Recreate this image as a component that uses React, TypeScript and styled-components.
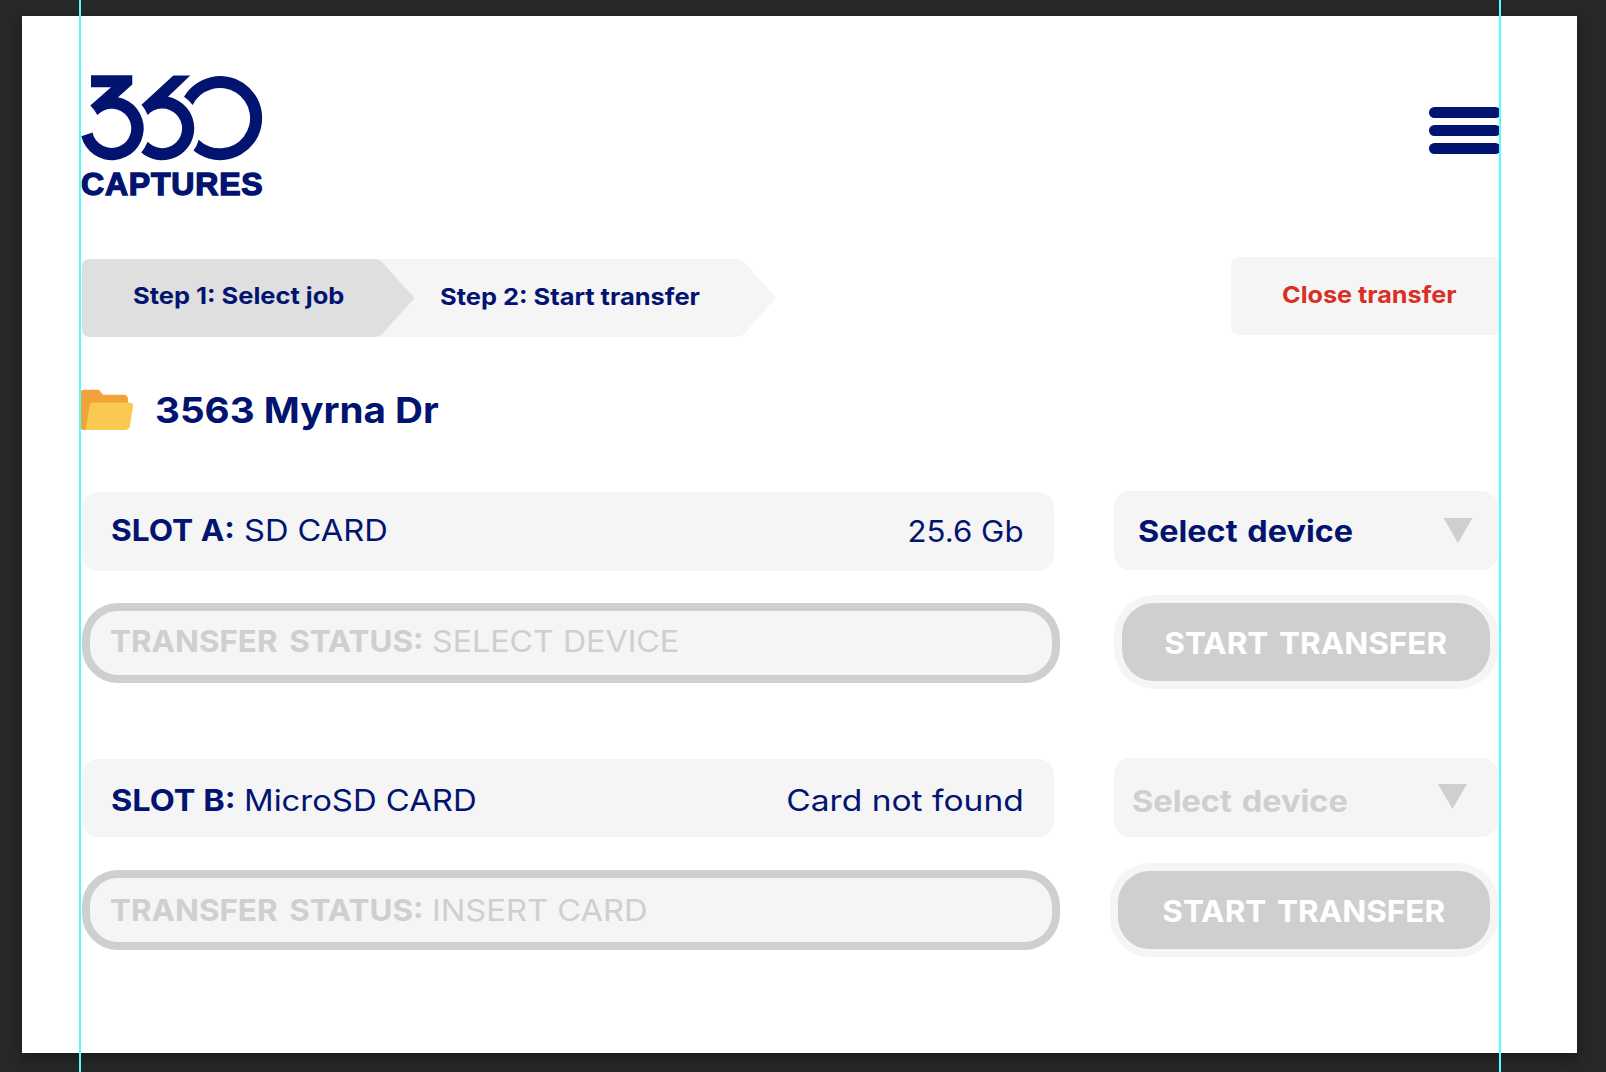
import React from 'react';
import styled, { createGlobalStyle } from 'styled-components';

const color = {
  navy: '#021470',
  panel: '#f5f5f5',
  muted: '#cfcfcf',
  step: '#dfdfdf',
  danger: '#d93025',
  guide: '#4dffff',
  desk: '#282828',
};

const GlobalStyle = createGlobalStyle`
  * { box-sizing: border-box; }
  body {
    margin: 0;
    background: ${color.desk};
    font-family: Inter, "Liberation Sans", sans-serif;
    color: ${color.navy};
  }
  button { font: inherit; color: inherit; border: 0; margin: 0; text-align: left; }
`;

const Desk = styled.div`
  position: relative;
  height: 1072px;
  width: 1606px;
  padding: 16px 29px 19px 22px;
  background: ${color.desk};
  overflow: hidden;
`;

const Guide = styled.div<{ $x: number }>`
  position: absolute;
  z-index: 5;
  top: 0;
  bottom: 0;
  left: ${(p) => p.$x}px;
  width: 2px;
  background: ${color.guide};
`;

const Sheet = styled.main`
  height: 1037px;
  padding: 59px 77px 0 60px;
  background: #fff;
  box-shadow: 0 5px 14px rgba(0, 0, 0, 0.4);
`;

/* Widens the letterforms to give the interface its extended look. */
const Wide = styled.span<{ $scale: number; $from?: 'left' | 'center' | 'right'; $word?: number }>`
  display: inline-block;
  word-spacing: ${(p) => p.$word ?? 0}px;
  transform: scaleX(${(p) => p.$scale});
  transform-origin: ${(p) => p.$from ?? 'left'} center;
`;

const Header = styled.header`
  display: flex;
  justify-content: space-between;
  align-items: flex-start;
  height: 122px;
`;

const Logo = styled.div`
  display: flex;
  flex-direction: column;
  gap: 10px;
  margin-left: -1px;
`;

const LogoMark = styled.svg`
  display: block;
  width: 183px;
  height: 86px;
  fill: ${color.navy};
`;

const LogoName = styled.span`
  font: 700 32px/26px "Liberation Sans", Arial, sans-serif;
  letter-spacing: 0.8px;
  -webkit-text-stroke: 1.4px ${color.navy};
  white-space: nowrap;
`;

const Menu = styled.button`
  display: flex;
  flex-direction: column;
  gap: 7px;
  width: 72px;
  margin: 32px -1px 0 0;
  padding: 0;
  background: none;
`;

const MenuBar = styled.span`
  height: 11px;
  border-radius: 5.5px;
  background: ${color.navy};
`;

const Toolbar = styled.nav`
  display: flex;
  justify-content: space-between;
  align-items: flex-start;
  height: 80px;
  margin-top: 60px;
  font-size: 23.5px;
  font-weight: 700;
  white-space: nowrap;
`;

const Steps = styled.div`
  display: flex;
  margin-top: 2px;
`;

const FirstStep = styled.div`
  position: relative;
  z-index: 1;
  display: flex;
  align-items: center;
  width: 333px;
  height: 78px;
  padding: 0 0 5px 51px;
  background: ${color.step};
  clip-path: path('M8 0H292Q297 0 301 4L332.5 39L301 74Q297 78 292 78H8Q0 78 0 70V8Q0 0 8 0Z');
`;

const SecondStep = styled.div`
  display: flex;
  align-items: center;
  width: 406px;
  height: 78px;
  margin-left: -45px;
  padding: 0 0 4px 70px;
  background: ${color.panel};
  clip-path: path('M0 0H366Q371 0 375 4L406 38.5L375 74Q371 78 366 78H0Z');
`;

const CloseButton = styled.button`
  width: 270px;
  height: 78px;
  margin-right: -1px;
  padding: 0 0 3px 50.5px;
  border-radius: 8px;
  background: ${color.panel};
  color: ${color.danger};
`;

const JobTitle = styled.h1`
  display: flex;
  align-items: center;
  gap: 21px;
  height: 42px;
  margin: 52px 0 60px -2px;
  font-size: 36px;
  font-weight: 700;
  line-height: 42px;
`;

const FolderIcon = styled.svg`
  width: 54px;
  height: 42px;
`;

const Slot = styled.section<{ $gap: number }>`
  display: grid;
  grid-template: 80px 94px / 978px 388px;
  gap: ${(p) => p.$gap}px 50px;
  align-items: start;
  font-size: 30px;
  line-height: 36px;
  white-space: nowrap;

  & + & { margin-top: 69px; }
`;

const CardInfo = styled.div<{ $height: number; $top?: number; $bottom?: number }>`
  display: flex;
  align-items: center;
  width: 972px;
  height: ${(p) => p.$height}px;
  margin-top: 1px;
  padding: ${(p) => p.$top ?? 0}px 30.5px ${(p) => p.$bottom ?? 0}px 29px;
  border-radius: 16px;
  background: ${color.panel};
`;

const Label = styled.strong<{ $width: number }>`
  width: ${(p) => p.$width}px;
  font-weight: 700;
`;

const Detail = styled.span`
  font-size: 29.5px;
  font-weight: 400;
`;

const Capacity = styled.span<{ $drop?: number }>`
  margin: ${(p) => p.$drop ?? 0}px 0 0 auto;
  font-size: 29.5px;
  font-weight: 400;
`;

const DeviceSelect = styled.button<{ $disabled?: boolean }>`
  display: flex;
  justify-content: space-between;
  align-items: center;
  justify-self: end;
  width: 384px;
  height: 79px;
  padding: ${(p) => (p.$disabled ? '0 31px 0 18px' : '0 25.5px 0 24px')};
  border-radius: 16px;
  background: ${color.panel};
  color: ${(p) => (p.$disabled ? color.muted : color.navy)};
  font-weight: 700;
`;

const SelectText = styled.span<{ $nudge: number }>`
  margin-top: ${(p) => p.$nudge}px;
`;

const Arrow = styled.span<{ $lift: number }>`
  width: 29px;
  height: 25px;
  margin-bottom: ${(p) => p.$lift}px;
  background: ${color.muted};
  clip-path: polygon(0 0, 100% 0, 50% 100%);
`;

const Status = styled.div<{ $nudge: number }>`
  display: flex;
  align-items: center;
  align-self: center;
  height: 80px;
  margin-top: ${(p) => (p.$nudge ? 1 : 0)}px;
  padding: 0 0 ${(p) => p.$nudge}px 20px;
  border: 8px solid ${color.muted};
  border-radius: 36px;
  background: ${color.panel};
  color: ${color.muted};
`;

const StartButton = styled.button<{ $width: number }>`
  justify-self: end;
  width: ${(p) => p.$width}px;
  height: 94px;
  padding: 1px 0 0;
  border: 8px solid ${color.panel};
  border-radius: 40px;
  background: ${color.muted};
  color: #fff;
  font-weight: 700;
  text-align: center;
`;

export default function App() {
  return (
    <Desk>
      <GlobalStyle />
      <Sheet>
        <Header>
          <Logo>
            <LogoMark viewBox="81 75 183 86" aria-label="360">
              <path d="M91 75.2H132.3V84.5L118 97.3A31.7 31.7 0 1 1 81.3 136.3L92.5 132.5A19.6 19.6 0 1 0 97.3 115Q94.5 109.5 90.3 105.5L111 87.2H91Z" />
              <path d="M173.3 75.5H190.3L168 96.8A32 32 0 1 1 141.2 152.4Q145 148 147.7 141.7A19.8 19.8 0 1 0 147.7 115Q145.3 109 141.5 104.8Z" />
              <path d="M184 96.7A42 42 0 1 1 193.5 150.6Q197 146 198.7 139.7A30.2 30.2 0 1 0 192.7 105Q189 100 184 96.7Z" />
            </LogoMark>
            <LogoName>CAPTURES</LogoName>
          </Logo>
          <Menu aria-label="Menu">
            <MenuBar />
            <MenuBar />
            <MenuBar />
          </Menu>
        </Header>

        <Toolbar>
          <Steps>
            <FirstStep><Wide $scale={1.084}>Step 1: Select job</Wide></FirstStep>
            <SecondStep><Wide $scale={1.083}>Step 2: Start transfer</Wide></SecondStep>
          </Steps>
          <CloseButton><Wide $scale={1.073}>Close transfer</Wide></CloseButton>
        </Toolbar>

        <JobTitle>
          <FolderIcon viewBox="80 389 54 42">
            <path fill="#f2a23a" d="M84 389.8H97.5Q99 389.8 100 391L102.8 394.8H123.5Q128 394.8 128 399.5V410L86 430H84Q80 430 80 426V393.8Q80 389.8 84 389.8Z" />
            <path fill="#f8ca50" d="M94 402.6H129.5Q133.6 402.6 133 406.8L130 425.8Q129.3 429.9 125.5 429.9H85.6L89.3 406.8Q90 402.6 94 402.6Z" />
          </FolderIcon>
          <Wide $scale={1.073}>3563 Myrna Dr</Wide>
        </JobTitle>

        <Slot $gap={24}>
          <CardInfo $height={79} $bottom={3}>
            <Label $width={133}><Wide $scale={1.055}>SLOT A:</Wide></Label>
            <Detail><Wide $scale={1.105}>SD CARD</Wide></Detail>
            <Capacity $drop={2}><Wide $scale={1.06} $from="right">25.6 Gb</Wide></Capacity>
          </CardInfo>
          <DeviceSelect>
            <SelectText $nudge={0}><Wide $scale={1.08} $word={2}>Select device</Wide></SelectText>
            <Arrow $lift={0} />
          </DeviceSelect>
          <Status $nudge={3}>
            <Label $width={322}><Wide $scale={1.046} $word={4}>TRANSFER STATUS:</Wide></Label>
            <Detail><Wide $scale={1.091}>SELECT DEVICE</Wide></Detail>
          </Status>
          <StartButton $width={384}><Wide $scale={1.05} $word={3} $from="center">START TRANSFER</Wide></StartButton>
        </Slot>

        <Slot $gap={25}>
          <CardInfo $height={78} $top={4}>
            <Label $width={132.5}><Wide $scale={1.085}>SLOT B:</Wide></Label>
            <Detail><Wide $scale={1.113}>MicroSD CARD</Wide></Detail>
            <Capacity><Wide $scale={1.138} $from="right">Card not found</Wide></Capacity>
          </CardInfo>
          <DeviceSelect $disabled>
            <SelectText $nudge={6}><Wide $scale={1.084} $word={2}>Select device</Wide></SelectText>
            <Arrow $lift={2} />
          </DeviceSelect>
          <Status $nudge={0}>
            <Label $width={322}><Wide $scale={1.046} $word={4}>TRANSFER STATUS:</Wide></Label>
            <Detail><Wide $scale={1.107}>INSERT CARD</Wide></Detail>
          </Status>
          <StartButton $width={388}><Wide $scale={1.05} $word={3} $from="center">START TRANSFER</Wide></StartButton>
        </Slot>
      </Sheet>
      <Guide $x={79} />
      <Guide $x={1499} />
    </Desk>
  );
}
